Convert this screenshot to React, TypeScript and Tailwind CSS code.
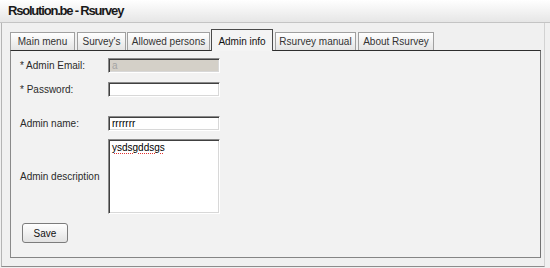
const tabs = [
  { label: "Main menu", w: "w-[65px]", ml: "ml-0" },
  { label: "Survey's", w: "w-[49px]", ml: "ml-[2px]" },
  { label: "Allowed persons", w: "w-[83px]", ml: "ml-[1px]" },
  { label: "Admin info", w: "w-[62px]", ml: "ml-[1px]", active: true },
  { label: "Rsurvey manual", w: "w-[81px]", ml: "ml-[2px]" },
  { label: "About Rsurvey", w: "w-[76px]", ml: "ml-[2px]" },
];

const inputCls =
  "h-[15px] w-[112px] border border-t-[#8a8a8a] border-l-[#8a8a8a] border-b-white border-r-white px-[3px] text-[10px] leading-[11px] shadow-[inset_1px_1px_0_#404040,inset_-1px_-1px_0_#d8d8d8] outline-none";

export default function App() {
  return (
    <div className="h-[268px] w-[550px] overflow-hidden bg-[#f0f0f0] font-['Liberation_Sans',Arial,sans-serif] text-[#2a2a2a]">
      <header className="flex h-[23px] items-center border-b border-[#c4c4c4] bg-gradient-to-b from-white to-[#e6e6e6] pl-[8px]">
        <h1 className="text-[13px] font-bold tracking-[-1.2px] text-[#1a1a1a]">Rsolution.be - Rsurvey</h1>
      </header>

      <div className="ml-[1px] h-[244px] w-[544px] border-b border-l border-r border-b-[#8c8c8c] border-l-[#b4b4b4] border-r-[#d2d2d2] pl-[8px] pt-[6px]">
        <nav className="flex h-[21px] items-end">
          {tabs.map((tab) =>
            tab.active ? (
              <div
                key={tab.label}
                className={`${tab.w} ${tab.ml} relative z-10 -mb-px flex h-[22px] items-center justify-center border border-b-0 border-[#4a4a4a] bg-[#f4f4f4] pt-[1px] text-[10px] text-[#111]`}
              >
                {tab.label}
              </div>
            ) : (
              <div
                key={tab.label}
                className={`${tab.w} ${tab.ml} flex h-[18px] items-center justify-center border border-b-0 border-[#a0a0a0] bg-gradient-to-b from-white to-[#e4e4e4] text-[10px] text-[#333]`}
              >
                {tab.label}
              </div>
            ),
          )}
        </nav>

        <section className="h-[208px] w-[531px] border border-t-[#2e2e2e] border-l-[#8a8a8a] border-r-[#737373] border-b-[#858585] bg-[#f2f2f2] pl-[9px] pt-[7px] text-[10px]">
          <div className="flex items-center">
            <label className="w-[88px]">* Admin Email:</label>
            <input readOnly value="a" className={`${inputCls} bg-[#d4d0c8] text-[#a4a4a4]`} />
          </div>

          <div className="mt-[9px] flex items-center">
            <label className="w-[88px]">* Password:</label>
            <input readOnly type="password" value="" className={`${inputCls} bg-white`} />
          </div>

          <div className="mt-[19px] flex items-center">
            <label className="w-[88px]">Admin name:</label>
            <input readOnly value="rrrrrrr" className={`${inputCls} bg-white text-black`} />
          </div>

          <div className="mt-[8px] flex items-center">
            <label className="w-[88px]">Admin description</label>
            <div className="h-[75px] w-[112px] border border-t-[#8a8a8a] border-l-[#8a8a8a] border-b-white border-r-white bg-white px-[3px] pt-[2px] text-[10px] leading-[12px] text-black shadow-[inset_1px_1px_0_#404040,inset_-1px_-1px_0_#d8d8d8]">
              <span className="underline decoration-[#e03030] decoration-dotted underline-offset-2">ysdsgddsgs</span>
            </div>
          </div>

          <button className="ml-[2px] mt-[9px] flex h-[20px] w-[46px] items-center justify-center rounded-[3px] border border-[#7c7c7c] bg-gradient-to-b from-white to-[#e2e2e2] text-[10px] text-[#111]">
            Save
          </button>
        </section>
      </div>
    </div>
  );
}
